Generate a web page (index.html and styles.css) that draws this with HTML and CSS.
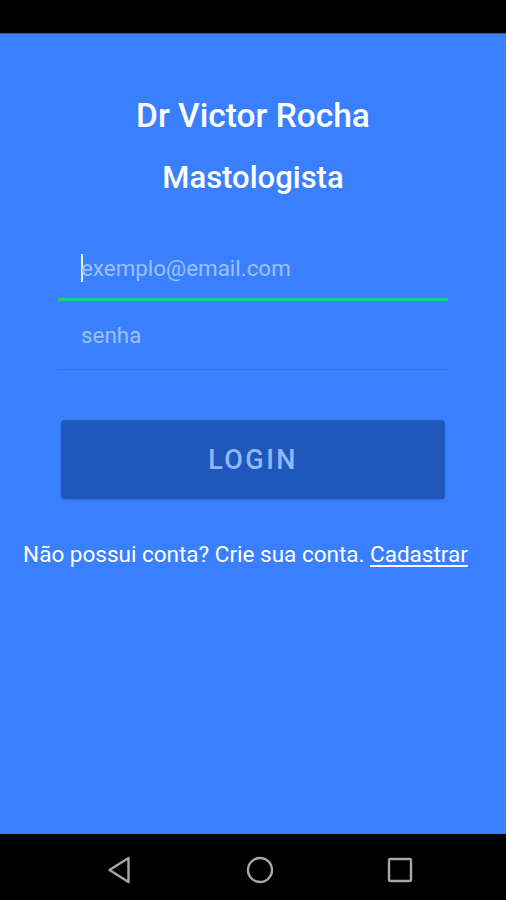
FILE: index.html
```html
<!DOCTYPE html>
<html>
<head>
<meta charset="utf-8">
<link rel="stylesheet" href="styles.css">
</head>
<body>
<div class="phone">
  <div class="status"></div>
  <main class="screen">
    <h1 class="title">Dr Victor Rocha</h1>
    <h2 class="subtitle">Mastologista</h2>
    <form class="form">
      <div class="field field-active">
        <span class="caret"></span><span class="placeholder">exemplo@email.com</span>
      </div>
      <div class="field">
        <span class="placeholder">senha</span>
      </div>
      <div class="btn">LOGIN</div>
    </form>
    <p class="signup">Não possui conta? Crie sua conta. <span class="link">Cadastrar</span></p>
  </main>
  <nav class="navbar">
    <svg class="nav-icon" width="28" height="28" viewBox="0 0 28 28"><path d="M22.5 2 L22.5 26 L3.5 14 Z" fill="none" stroke="#a8a8a8" stroke-width="2.4" stroke-linejoin="round"/></svg>
    <svg class="nav-icon" width="28" height="28" viewBox="0 0 28 28"><circle cx="14" cy="14" r="12" fill="none" stroke="#a8a8a8" stroke-width="2.4"/></svg>
    <svg class="nav-icon" width="28" height="28" viewBox="0 0 28 28"><rect x="3" y="3" width="22" height="22" rx="1.5" fill="none" stroke="#a8a8a8" stroke-width="2.4"/></svg>
  </nav>
</div>
</body>
</html>
```
FILE: styles.css
```css
* { box-sizing: border-box; }
html, body { margin: 0; padding: 0; }
body { font-family: Roboto, "Noto Sans", sans-serif; background: #000; }
.phone { width: 506px; height: 900px; display: flex; flex-direction: column; }
.status { height: 34px; background: #000; border-bottom: 1px solid #2a5bb0; }
.screen {
  flex: 1;
  background: #3a80fe;
  display: flex;
  flex-direction: column;
  align-items: center;
  padding-top: 60px;
}
.title {
  margin: 0;
  color: #fff;
  font-size: 33.5px;
  font-weight: 500;
  line-height: 44px;
}
.subtitle {
  margin: 18px 0 0;
  color: #fff;
  font-size: 31px;
  font-weight: 500;
  line-height: 44px;
}
.form {
  width: 390px;
  margin-top: 31px;
  display: flex;
  flex-direction: column;
}
.field {
  height: 69px;
  display: flex;
  align-items: center;
  padding-left: 23px;
  border-bottom: 1px solid rgba(40, 90, 190, 0.35);
}
.field-active {
  height: 70px;
  border-bottom: 3px solid #1fd07a;
  padding-top: 6px;
}
.caret { width: 2px; height: 28px; background: #e8f0ff; margin-right: -2px; }
.placeholder { color: #9cc0ff; font-size: 22.4px; }
.btn {
  margin: 50px 3px 0;
  height: 79px;
  background: #1f57bb;
  border-radius: 4px;
  box-shadow: 0 1px 2px rgba(0,0,0,0.15);
  display: flex;
  align-items: center;
  justify-content: center;
  color: #8fb8fb;
  font-size: 27px;
  font-weight: 500;
  letter-spacing: 2.4px;
}
.signup {
  margin: 42px 0 0;
  padding-right: 15px;
  color: #fff;
  font-size: 22.5px;
  line-height: 26px;
}
.link { text-decoration: underline; text-underline-offset: 3px; }
.navbar {
  height: 66px;
  background: #000;
  display: flex;
  align-items: center;
  justify-content: center;
  gap: 112px;
  padding-top: 6px;
  padding-left: 14px;
}
.nav-icon { display: block; }
```
